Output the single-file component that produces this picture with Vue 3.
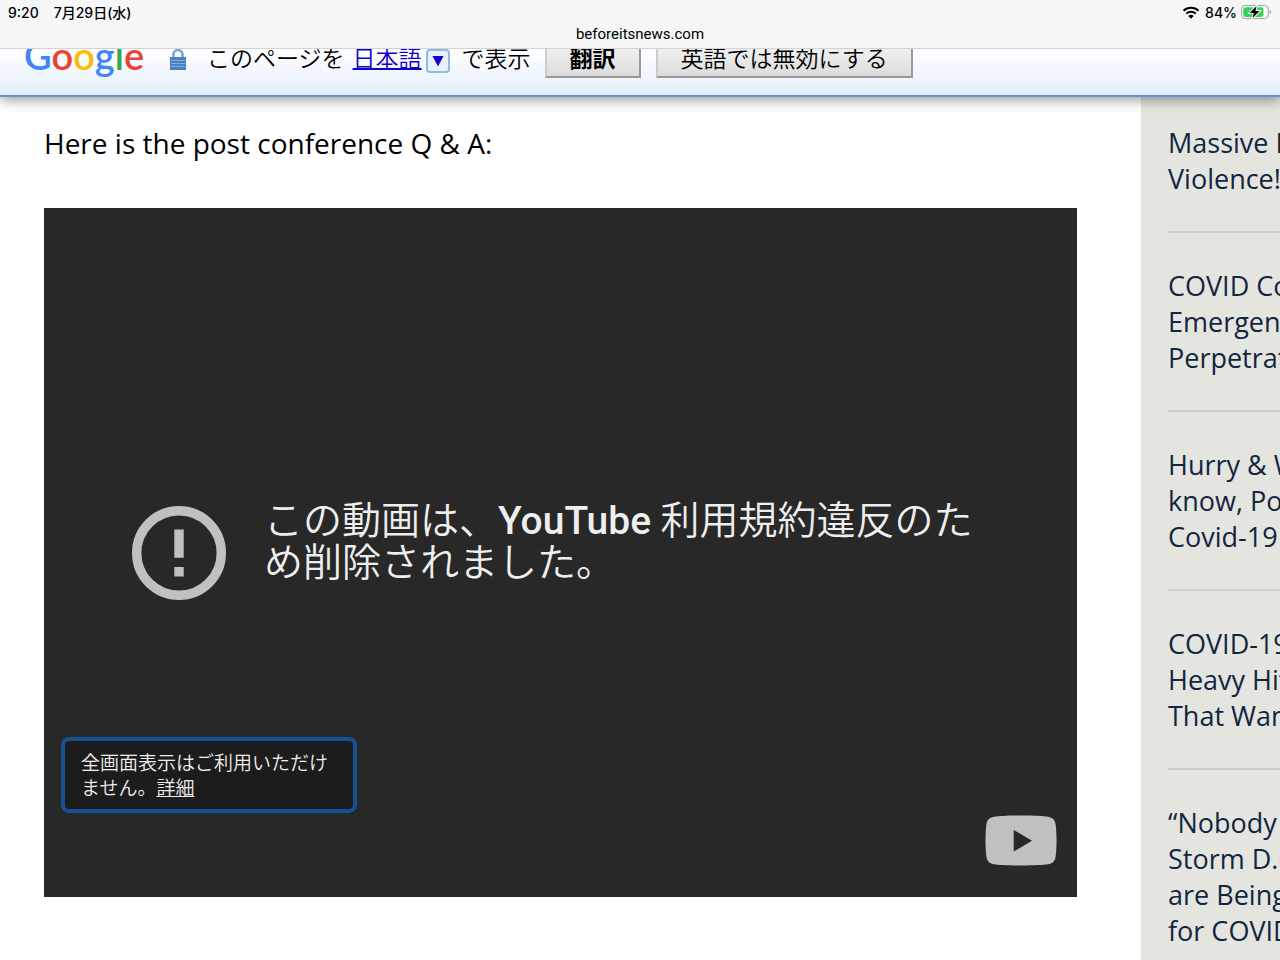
<script setup>
import { ref } from "vue";

const language = ref("日本語");

const logo = [
  { char: "G", color: "blue" },
  { char: "o", color: "red" },
  { char: "o", color: "yellow" },
  { char: "g", color: "blue" },
  { char: "l", color: "green" },
  { char: "e", color: "red" },
];

const stories = [
  ["Massive D", "Violence!"],
  ["COVID Co", "Emergenc", "Perpetrat"],
  ["Hurry & W", "know, Pos", "Covid-19"],
  ["COVID-19", "Heavy Hit", "That Wan"],
  ["“Nobody", "Storm D.C", "are Being", "for COVID"],
];
</script>

<template>
  <div class="page">
    <header class="browser-bar">
      <div class="status-row">
        <span class="status-time">9:20</span>
        <span class="status-date">7月29日(水)</span>
        <svg class="wifi" viewBox="0 0 18 13" aria-hidden="true">
          <path d="M1.5 4.8a10.8 10.8 0 0 1 15 0" />
          <path d="M4.2 7.6a6.9 6.9 0 0 1 9.6 0" />
          <path class="wifi-dot" d="M9 12.8 6.3 10.1a3.9 3.9 0 0 1 5.4 0z" />
        </svg>
        <span class="status-percent">84%</span>
        <svg class="battery" viewBox="0 0 32 16" aria-hidden="true">
          <rect x="0.6" y="1" width="28.4" height="14" rx="4" fill="#fafafa" stroke="#9a9a9a" />
          <rect x="2.4" y="2.8" width="21.5" height="10.4" rx="2.4" fill="#34d158" />
          <path d="M30.6 5.6v4.8c1.8-.8 1.8-4 0-4.8z" fill="#9a9a9a" />
          <path d="M16.6 1.6 9.2 9h4.4l-1.2 5.4L19.8 7h-4.4z" fill="#000" stroke="#fafafa" stroke-width="2.2" paint-order="stroke" />
        </svg>
      </div>
      <div class="address">beforeitsnews.com</div>
    </header>

    <div class="translate-bar">
      <span class="google-logo">
        <span v-for="(letter, i) in logo" :key="i" :class="letter.color">{{ letter.char }}</span>
      </span>
      <svg class="lock" viewBox="0 0 18 24" aria-hidden="true">
        <path d="M4.5 12V7.5a4.5 4.5 0 0 1 9 0V12" fill="none" stroke="#7da3d3" stroke-width="2.6" />
        <rect x="1" y="10" width="16" height="13" fill="#4a7fc1" />
        <path d="M2 13.5h14M2 16.5h14M2 19.5h14" stroke="#88aedd" stroke-width="1" />
      </svg>
      <span class="translate-text">このページを</span>
      <a class="language" href="#">{{ language }}</a>
      <button class="language-toggle" type="button" aria-label="言語を選択">
        <svg viewBox="0 0 12 12" aria-hidden="true"><path d="M0.5 1h11L6 11.5z" fill="#1100cc" /></svg>
      </button>
      <span class="translate-text suffix">で表示</span>
      <button class="bar-button primary" type="button">翻訳</button>
      <button class="bar-button" type="button">英語では無効にする</button>
    </div>

    <div class="content">
      <main class="article">
        <p class="lead">Here is the post conference Q &amp; A:</p>
        <section class="player">
          <div class="player-error">
            <svg class="error-icon" viewBox="0 0 20 20" aria-hidden="true">
              <circle cx="10" cy="10" r="9" fill="none" stroke="#c0c0c0" stroke-width="2" />
              <path d="M9 5h2v6H9zM9 13h2v2H9z" fill="#c0c0c0" />
            </svg>
            <p class="error-text">この動画は、<b>YouTube</b> 利用規約違反のため削除されました。</p>
          </div>
          <div class="player-footer">
            <p class="notice">全画面表示はご利用いただけません。<a href="#">詳細</a></p>
            <a class="youtube" href="#" aria-label="YouTube">
              <svg viewBox="0 0 72 51" aria-hidden="true">
                <path d="M36 .5C50 .5 58 1 63 1.700C68 2.500 70 5 70.700 10C71.800 19 71.800 32 70.700 41C70 46 68 48.500 63 49.300C58 50 50 50.500 36 50.500S14 50 9 49.300C4 48.500 2 46 1.300 41C.2 32 .2 19 1.300 10C2 5 4 2.500 9 1.700C14 1 22 .5 36 .5z" fill="#c0c0c0" />
                <path d="M28.700 15v21.500L47 25.700z" fill="#282828" />
              </svg>
            </a>
          </div>
        </section>
      </main>

      <aside class="sidebar">
        <ul class="story-list">
          <li v-for="(story, i) in stories" :key="i" class="story">
            <a href="#">
              <span v-for="line in story" :key="line" class="story-line">{{ line }}</span>
            </a>
          </li>
        </ul>
      </aside>
    </div>
  </div>
</template>

<style>
body {
  margin: 0;
  background: #fff;
}
</style>

<style scoped>
.page {
  display: flex;
  flex-direction: column;
  height: 100vh;
  overflow: hidden;
  font-family: "Open Sans", "Noto Sans CJK JP", sans-serif;
  color: #000;
}

.browser-bar {
  position: relative;
  z-index: 3;
  flex: none;
  background: #f6f6f6;
  border-bottom: 1px solid #d2d3d6;
  font-family: Inter, "Noto Sans CJK JP", sans-serif;
}

.status-row {
  display: flex;
  align-items: center;
  height: 24px;
  padding: 0 9px 0 8px;
  font-size: 14px;
  font-weight: 500;
}

.status-date {
  margin-left: 15px;
}

.wifi {
  width: 18px;
  height: 13px;
  margin-left: auto;
  fill: none;
  stroke: #000;
  stroke-width: 2;
}

.wifi-dot {
  fill: #000;
  stroke: none;
}

.status-percent {
  margin: 0 4px 0 5px;
}

.battery {
  width: 30px;
  height: 16px;
}

.address {
  height: 24px;
  line-height: 20px;
  font-family: Roboto, sans-serif;
  font-size: 15px;
  text-align: center;
}

.translate-bar {
  position: relative;
  z-index: 2;
  display: flex;
  flex: none;
  align-items: center;
  height: 76px;
  margin-top: -30px;
  padding-left: 24px;
  border-bottom: 2px solid #6b90da;
  background: linear-gradient(#fff 40%, #e3eefb);
  box-shadow: 0 3px 12px rgba(0, 0, 0, 0.4);
  font-family: "Noto Sans CJK JP", sans-serif;
  font-size: 23px;
  font-weight: 350;
  line-height: 36px;
  white-space: nowrap;
}

.google-logo {
  width: 121px;
  padding-bottom: 4px;
  font-family: Lato, sans-serif;
  font-size: 38px;
  font-weight: 600;
}

.blue {
  color: #4285f4;
}

.red {
  color: #ea4335;
}

.yellow {
  color: #fbbc05;
}

.green {
  color: #34a853;
}

.lock {
  width: 18px;
  height: 24px;
  margin: 4px 0 0 24px;
}

.translate-text {
  margin-left: 20px;
}

.translate-text.suffix {
  margin-left: 12px;
}

.language {
  margin-left: 8px;
  color: #1100cc;
  text-decoration-thickness: 2px;
}

.language-toggle {
  display: flex;
  align-items: center;
  justify-content: center;
  width: 24px;
  height: 24px;
  margin: 8px 0 0 4px;
  padding: 0;
  border: 2px solid #93b9dc;
  border-radius: 4px;
  background: #e6f1fd;
}

.language-toggle svg {
  width: 12px;
  height: 12px;
}

.bar-button {
  height: 42px;
  margin-left: 15px;
  padding: 0 23px;
  border: 2px solid #ccc;
  border-right-color: #999;
  border-bottom-color: #999;
  background: linear-gradient(#f8f8f8, #dcdcdc);
  color: #000;
  font: inherit;
  line-height: 34px;
}

.bar-button.primary {
  margin-left: 14px;
  font-weight: 700;
}

.content {
  display: flex;
  flex: 1;
  min-height: 0;
}

.article {
  flex: 1;
  min-width: 0;
  padding: 28px 64px 0 44px;
}

.lead {
  margin: 0 0 47px;
  font-size: 28px;
  line-height: 36px;
}

.player {
  display: grid;
  grid-template-rows: 1fr auto 1fr;
  aspect-ratio: 3 / 2;
  background: #282828;
}

.player-error {
  display: flex;
  grid-row: 2;
  align-items: center;
  padding: 2px 96px 0 88px;
}

.error-icon {
  flex: none;
  width: 94px;
  height: 94px;
}

.error-text {
  margin: 0 0 0 38px;
  padding-bottom: 22px;
  color: #eee;
  font-family: Roboto, "Noto Sans CJK JP", sans-serif;
  font-size: 39px;
  font-weight: 350;
  line-height: 42px;
}

.error-text b {
  font-weight: 500;
}

.player-footer {
  display: flex;
  grid-row: 3;
  align-items: flex-end;
  justify-content: space-between;
  padding: 0 20px 31px 17px;
}

.notice {
  box-sizing: border-box;
  width: 296px;
  margin: 0 0 53px;
  padding: 8px 16px 10px;
  border: 4px solid #165293;
  border-radius: 8px;
  background: #1c1c1c;
  color: #eee;
  font-family: "Noto Sans CJK JP", sans-serif;
  font-size: 19px;
  font-weight: 350;
  line-height: 25px;
}

.notice a {
  color: inherit;
}

.youtube {
  display: flex;
}

.youtube svg {
  width: 72px;
  height: 51px;
}

.sidebar {
  flex: none;
  width: 112px;
  padding: 28px 0 0 27px;
  background: #e4e5df;
  overflow: hidden;
}

.story-list {
  margin: 0;
  padding: 0;
  list-style: none;
}

.story {
  margin-bottom: 35px;
  padding-bottom: 34px;
  border-bottom: 2px solid #cccdcd;
}

.story a {
  color: #12263f;
  font-size: 27px;
  line-height: 36px;
  text-decoration: none;
  white-space: nowrap;
}

.story-line {
  display: block;
}
</style>
